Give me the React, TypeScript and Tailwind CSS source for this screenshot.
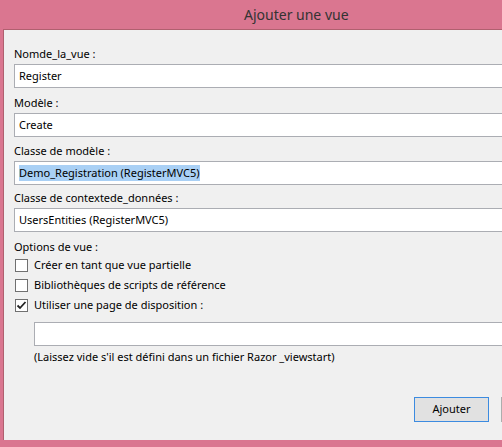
import React from 'react';

const font = { fontFamily: '"Noto Sans", "Open Sans", sans-serif' };

const Field = ({ label, value, selected, className }: { label: string; value: string; selected?: boolean; className?: string }) => (
  <div className={className}>
    <div className="h-4 leading-4 mb-[2px]">{label}</div>
    <div className="h-6 w-[560px] border border-[#abadb3] bg-white flex items-center pl-1">
      {selected ? <span className="bg-[#a9d0f5] leading-4">{value}</span> : <span className="leading-4">{value}</span>}
    </div>
  </div>
);

const Check = ({ label, checked }: { label: string; checked?: boolean }) => (
  <div className="flex items-center h-5">
    <div className="w-[13px] h-[13px] ml-[1px] border border-[#707070] bg-white flex items-center justify-center">
      {checked && (
        <svg width="11" height="11" viewBox="0 0 11 11">
          <path d="M1.5 5.5 L4 8 L9.5 2" fill="none" stroke="#222" strokeWidth="1.8" />
        </svg>
      )}
    </div>
    <span className="ml-[6px] leading-4">{label}</span>
  </div>
);

export default function App() {
  return (
    <div className="w-[502px] h-[447px] bg-[#da7690] overflow-hidden text-[11px] text-black" style={font}>
      <div className="h-[29px] pl-[244px] flex items-center text-[14px] text-[#333]">Ajouter une vue</div>
      <div className="ml-[3px] h-[411px] w-[600px] bg-[#f0f0f0] border-l border-t border-[#b0606f] pt-4 pl-[10px]">
        <Field label="Nomde_la_vue :" value="Register" />
        <Field className="mt-[7px]" label="Modèle :" value="Create" />
        <Field className="mt-[6px]" label="Classe de modèle :" value="Demo_Registration (RegisterMVC5)" selected />
        <Field className="mt-[5px]" label="Classe de contextede_données :" value="UsersEntities (RegisterMVC5)" />
        <div className="mt-[7px] h-4 leading-4">Options de vue :</div>
        <div>
          <Check label="Créer en tant que vue partielle" />
          <Check label="Bibliothèques de scripts de référence" />
          <Check label="Utiliser une page de disposition :" checked />
        </div>
        <div className="ml-5 mt-[7px] h-6 w-[540px] border border-[#abadb3] bg-white" />
        <div className="ml-5 mt-[3px] h-4 leading-4">(Laissez vide s'il est défini dans un fichier Razor _viewstart)</div>
        <div className="flex mt-[32px] ml-[400px] gap-3">
          <div className="w-[75px] h-[25px] border border-[#3c8be0] bg-[#e1e1e1] flex items-center justify-center">Ajouter</div>
          <div className="w-[75px] h-[25px] border border-[#adadad] bg-[#e1e1e1]" />
        </div>
      </div>
    </div>
  );
}
